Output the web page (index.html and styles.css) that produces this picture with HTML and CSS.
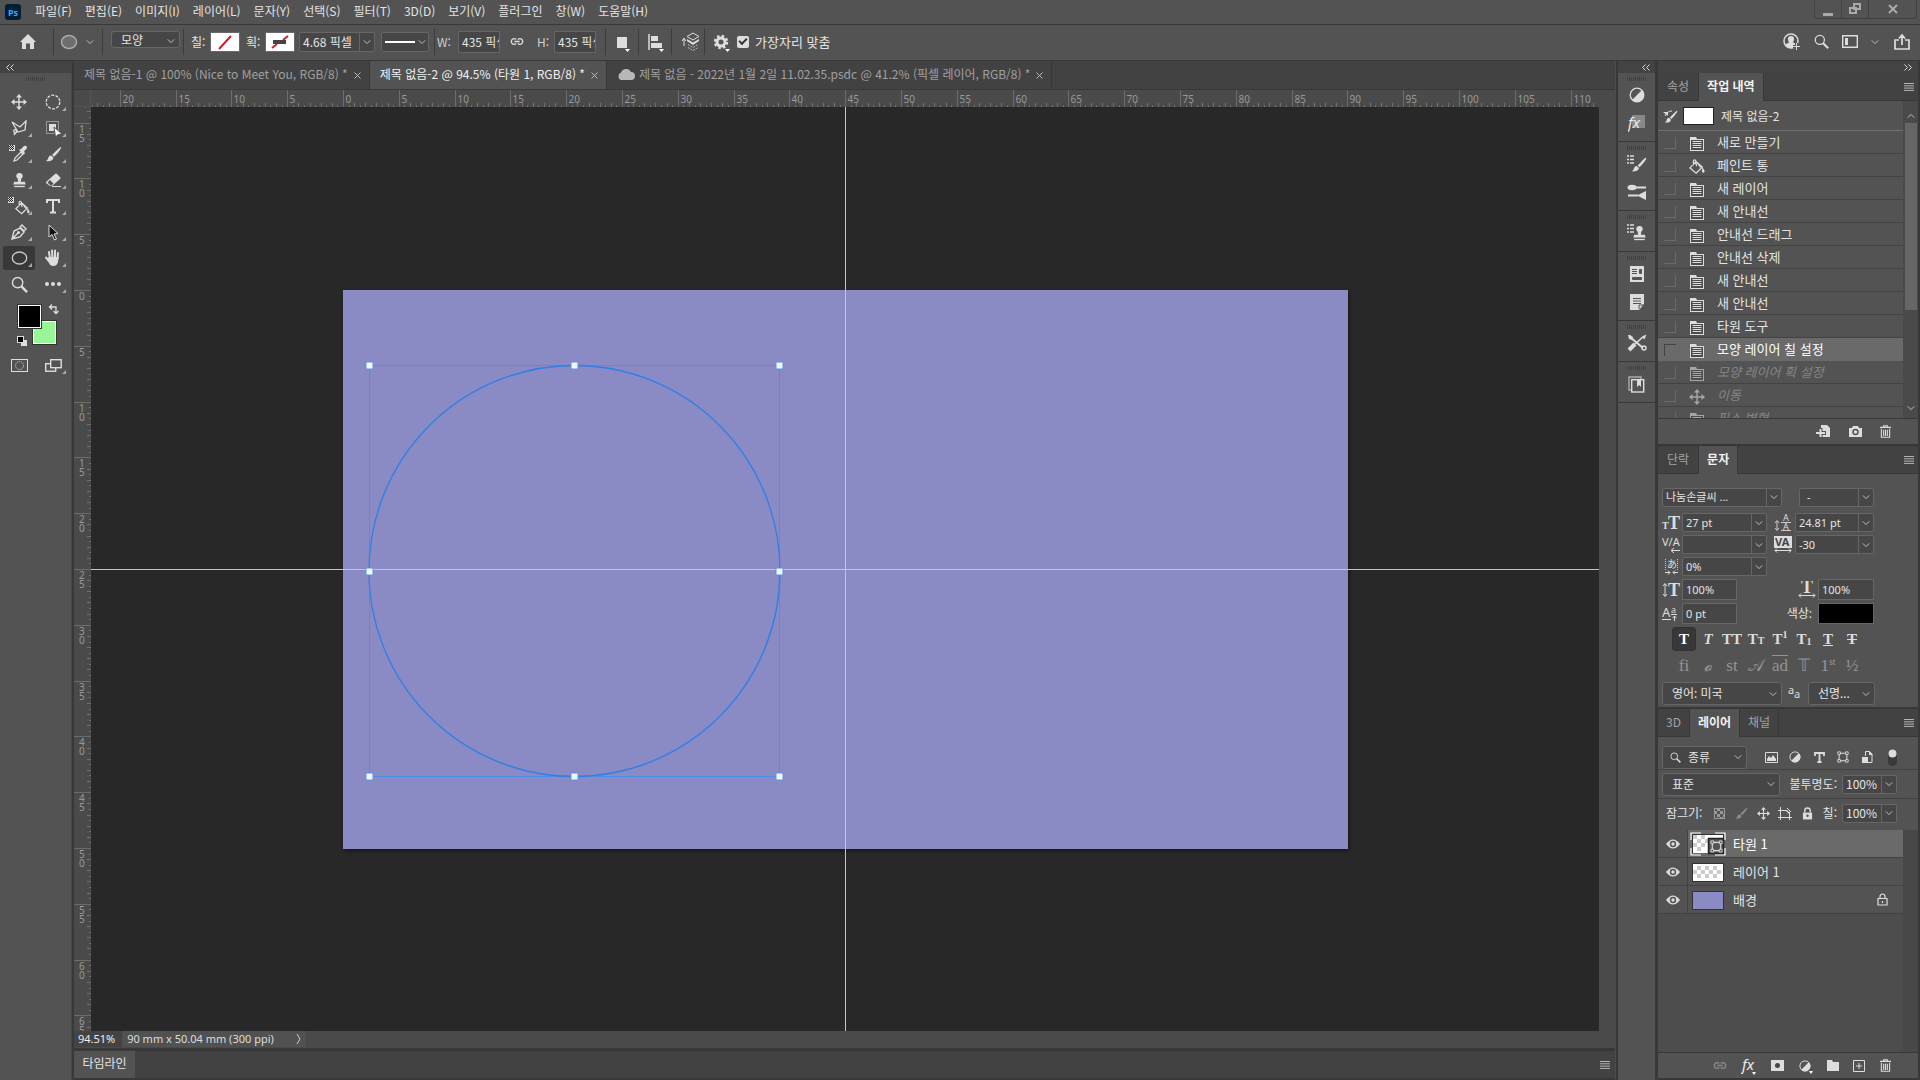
FILE: index.html
```html
<!DOCTYPE html>
<html lang="ko">
<head>
<meta charset="utf-8">
<title>제목 없음-2</title>
<link rel="stylesheet" href="styles.css">
</head>
<body>
<svg class="sprite" aria-hidden="true">
  <symbol id="chev" viewBox="0 0 10 10"><path d="M1 3l4 4 4-4" fill="none" stroke="#c4c4c4" stroke-width="1.2"/></symbol>
  <symbol id="burger" viewBox="0 0 10 8"><path d="M0 .5h10M0 2.8h10M0 5.1h10M0 7.4h10" stroke="#b5b5b5"/></symbol>
  <symbol id="doc" viewBox="0 0 16 16"><path d="M1 1h6l1 2h7v12H1z" fill="#ddd"/><path d="M2 4h12v10H2z" fill="#4c4c4c"/><path d="M3.500 5.500h9M3.500 7.500h9M3.500 9.500h9M3.500 11.500h9" stroke="#ddd"/></symbol>
  <symbol id="move" viewBox="0 0 16 16"><path d="M8 2v12M2 8h12" stroke="currentColor" stroke-width="1.400"/><path d="M8 0l3 3.500H5zM8 16l3-3.500H5zM0 8l3.500-3v6zM16 8l-3.500-3v6z" fill="currentColor"/></symbol>
  <symbol id="bucket" viewBox="0 0 18 17"><path d="M1 10l7-7 7 6-7 7zM5 7V2q1-2 2.500 0l1 6" fill="none" stroke="currentColor" stroke-width="1.400"/><path d="M15 9q3 4 2.500 5.500-1.500 2-3 0zM7.500 3l7 6-2 1z" fill="currentColor"/></symbol>
  <symbol id="half" viewBox="0 0 16 16"><circle cx="8" cy="8" r="6.800" fill="none" stroke="currentColor" stroke-width="1.300"/><path d="M13 3a7 7 0 0 1-10 10z" fill="currentColor"/></symbol>
  <symbol id="trash" viewBox="0 0 12 14"><path d="M0 2.500h12M4 2V.7h4V2M1.500 4v9.300h9V4M4 5v7M6 5v7M8 5v7" fill="none" stroke="currentColor" stroke-width="1.200"/></symbol>
  <symbol id="brush" viewBox="0 0 18 18"><path d="M17 1q1 1-5 8l-2.500 2.500-2-2L10 7q6-6.500 7-6z" fill="currentColor"/><path d="M6.500 10l2.500 2.500q-1 4.500-8 3.500 2-1 2.500-3.500.5-2.500 3-2.500z" fill="currentColor"/></symbol>
  <symbol id="stamp" viewBox="0 0 16 18"><path d="M8 1a3.500 3.500 0 0 1 2 6.500L9.500 11H14l1 3H1l1-3h4.500L6 7.500A3.500 3.500 0 0 1 8 1z" fill="currentColor"/><path d="M2 16.300h12" stroke="currentColor" stroke-width="1.500"/></symbol>
  <symbol id="eye" viewBox="0 0 14 10"><path d="M0 5q7-9 14 0-7 9-14 0z" fill="#ddd"/><circle cx="7" cy="5" r="3.200" fill="#555"/><circle cx="7" cy="5" r="1.700" fill="#ddd"/></symbol>
  <symbol id="shape" viewBox="0 0 14 14"><path d="M3 2.500h8M3 11.500h8M2.500 3v8M11.500 3v8" stroke="currentColor" stroke-width="1.200"/><path d="M1 1h3v3H1zM10 1h3v3h-3zM1 10h3v3H1zM10 10h3v3h-3z" fill="#555" stroke="currentColor"/></symbol>
  <symbol id="link" viewBox="0 0 16 10"><path d="M7 2.800A3.200 3.200 0 1 0 7 7.200M9 2.800A3.200 3.200 0 1 1 9 7.200M5 5h6" fill="none" stroke="currentColor" stroke-width="1.500"/></symbol>
  <symbol id="mag" viewBox="0 0 18 18"><circle cx="7" cy="7" r="5.500" fill="none" stroke="currentColor" stroke-width="1.500"/><path d="M11 11l6 6" stroke="currentColor" stroke-width="2.500"/></symbol>
  <symbol id="lock" viewBox="0 0 12 14"><path d="M3 6V4a3 3 0 0 1 6 0v2" fill="none" stroke="currentColor" stroke-width="1.500"/><path d="M1 6h10v7.500H1z" fill="currentColor"/><circle cx="6" cy="9.500" r="1.300" fill="#555"/></symbol>
  <symbol id="list" viewBox="0 0 7 9"><path d="M0 1h2M3 1h4M0 4.500h2M3 4.500h4M0 8h2M3 8h4" stroke="currentColor" stroke-width="1.400"/></symbol>
  <symbol id="checker" viewBox="0 0 6 6"><path d="M0 0h6v6H0z" fill="#ddd"/><path d="M1 0h1v1H1zM3 0h1v1H3zM0 1h1v1H0zM2 1h1v1H2zM4 1h1v1H4zM1 2h1v1H1zM3 2h1v1H3zM0 3h1v1H0zM2 3h1v1H2zM4 3h1v1H4zM1 4h1v1H1zM3 4h1v1H3z" fill="#222"/></symbol>
</svg>

<header class="menubar">
  <svg class="logo" viewBox="0 0 16 16"><rect width="16" height="16" rx="3" fill="#001e36"/><text x="8" y="12" text-anchor="middle">Ps</text></svg>
  <nav class="menu">
    <button>파일(F)</button><button>편집(E)</button><button>이미지(I)</button><button>레이어(L)</button><button>문자(Y)</button><button>선택(S)</button><button>필터(T)</button><button>3D(D)</button><button>보기(V)</button><button>플러그인</button><button>창(W)</button><button>도움말(H)</button>
  </nav>
  <div class="winbtns">
    <button aria-label="최소화"><svg width="10" height="14"><path d="M0 12.500h10" stroke="#aaa" stroke-width="3"/></svg></button>
    <button aria-label="이전 크기로"><svg width="12" height="12"><path d="M5 1h6v5H5zM1 5h6v5H1z" fill="#555" stroke="#aaa" stroke-width="2"/></svg></button>
    <button class="close" aria-label="닫기"><svg width="10" height="10"><path d="M1 1l8 8M9 1L1 9" stroke="#aaa" stroke-width="2"/></svg></button>
  </div>
</header>

<div class="options">
  <button class="home" aria-label="홈"><svg width="16" height="15"><path d="M8 0l8 8h-2v7h-4V9.500H6V15H2V8H0z" fill="#ddd"/></svg></button>
  <div class="opt toolpick"><svg width="18" height="16"><ellipse cx="9" cy="8" rx="7.500" ry="6.500" fill="#6e6e6e" stroke="#aaa" stroke-width="1.500"/></svg><svg width="8" height="8"><use href="#chev"/></svg></div>
  <div class="opt modepick"><span class="sel"><select aria-label="모드"><option>모양</option></select><svg width="8" height="8"><use href="#chev"/></svg></span></div>
  <div class="opt paint">
    <span>칠:</span><button class="swatch" aria-label="칠"><svg width="26" height="16"><path d="M7 15L19 2" stroke="#c8202c" stroke-width="2"/></svg></button>
    <span>획:</span><button class="swatch" aria-label="획"><svg width="26" height="16"><path d="M5 14l5-4M16 6l5-4" stroke="#c8202c" stroke-width="2"/><path d="M6 6h13v4H6z" fill="#444"/></svg></button>
    <span class="combo sw"><input aria-label="획 폭" value="4.68 픽셀"><button aria-label="목록"><svg width="8" height="8"><use href="#chev"/></svg></button></span>
    <button class="linetype" aria-label="획 유형"><svg width="30" height="4"><path d="M0 2h30" stroke="#fff" stroke-width="2"/></svg><svg width="8" height="8"><use href="#chev"/></svg></button>
  </div>
  <div class="opt dims">
    <label for="w">W:</label><input id="w" value="435 픽셀"><svg class="dimlink" width="14" height="9"><use href="#link"/></svg><label for="h">H:</label><input id="h" value="435 픽셀">
  </div>
  <div class="opt ob"><button aria-label="패스 작업"><svg width="16" height="20"><path d="M2 5h10v11H2z" fill="#ddd"/><path d="M10 17h5l-2.500 3z" fill="#fff"/></svg></button></div>
  <div class="opt ob"><button aria-label="맞춤"><svg width="16" height="20"><path d="M1 2v16" stroke="#ddd" stroke-width="1.500"/><path d="M3 4h7v5H3zM3 11h11v5H3z" fill="#ddd"/><path d="M11 17h5l-2.500 3z" fill="#fff"/></svg></button></div>
  <div class="opt ob wide"><button aria-label="정돈"><svg width="20" height="20"><path d="M3 14V7M1 9l2-3 2 3" fill="none" stroke="#ddd"/><path d="M12 1l6 3.500-6 3.500-6-3.500z" fill="none" stroke="#ddd"/><path d="M6 7l6 3.500L18 7v2l-6 4-6-4z" fill="#ddd"/><path d="M7 12.500l5 3 5-3M7 15.500l5 3 5-3" fill="none" stroke="#bbb" stroke-dasharray="2 1"/></svg></button></div>
  <div class="opt last">
    <svg width="18" height="20"><circle cx="8" cy="10" r="4" fill="none" stroke="#ddd" stroke-width="3"/><circle cx="8" cy="10" r="6" fill="none" stroke="#ddd" stroke-width="2.500" stroke-dasharray="2.500 2.200"/><path d="M12 17h5l-2.500 3z" fill="#fff"/></svg>
    <label class="check"><input type="checkbox" checked><span>가장자리 맞춤</span></label>
  </div>
  <div class="acct">
    <svg width="18" height="18"><circle cx="8" cy="8" r="7" fill="none" stroke="#ddd" stroke-width="1.500"/><path d="M2 13q1-3 4-3.500Q3 3 8 3t2 6.500q3 .5 3.500 2l-3 3.500q-5 1-8.500-2z" fill="#ddd"/><path d="M13.500 10v7M10 13.500h7" stroke="#535353" stroke-width="3"/><path d="M13.500 10v7M10 13.500h7" stroke="#ddd"/></svg>
    <svg width="15" height="15"><use href="#mag"/></svg>
    <svg width="16" height="13"><path d="M.7.7h14.600v11.600H.7z" fill="none" stroke="#ddd" stroke-width="1.400"/><path d="M3 3h3v7H3z" fill="#ddd"/></svg>
    <svg class="wschev" width="8" height="8"><use href="#chev"/></svg>
    <svg width="16" height="16"><path d="M5 6H1v9h14V6h-4M8 11V2M5 4.500L8 1l3 3.500" fill="none" stroke="#ddd" stroke-width="1.700"/></svg>
  </div>
</div>

<main class="work">
  <aside class="tools">
    <div class="dockhead"><svg width="8" height="7"><path d="M3.500.5l-3 3 3 3M7.500.5l-3 3 3 3" fill="none" stroke="#ddd"/></svg></div>
    <div class="toolbody">
      <div class="grip"></div>
      <div class="toolgrid">
        <button aria-label="이동"><svg width="16" height="16"><use href="#move"/></svg></button>
        <button class="more" aria-label="원형 선택"><svg width="16" height="16"><circle cx="8" cy="8" r="6.800" fill="none" stroke="#ddd" stroke-width="1.300" stroke-dasharray="3 1.300"/></svg></button>
        <button class="more" aria-label="올가미"><svg width="16" height="16"><path d="M1 2l8 5 6-6-1 9-7 2zM6 11q-4-3-3 1t3-1l-3 4" fill="none" stroke="#ddd" stroke-width="1.300"/></svg></button>
        <button class="more" aria-label="개체 선택"><svg width="17" height="17"><path d="M1.500 1.500h12v12h-12z" fill="none" stroke="#ddd" stroke-dasharray="1 1"/><path d="M4 4h7v7H4z" fill="#ddd"/><path d="M9 7l8 7-4 .5L10.500 17z" fill="#fff" stroke="#535353"/></svg></button>
        <button class="more" aria-label="스포이드"><svg width="20" height="18"><use href="#checker" width="6" height="6"/><path d="M5 16l1-3 6-6 2 2-6 6z" fill="none" stroke="#ddd" stroke-width="1.300"/><path d="M10 5l2-1 3-3q3-1 3 2l-3 3.500 1 2-1.500 1z" fill="#ddd"/></svg></button>
        <button class="more" aria-label="브러시"><svg width="17" height="17"><use href="#brush"/></svg></button>
        <button class="more" aria-label="도장"><svg width="15" height="16"><use href="#stamp"/></svg></button>
        <button class="more" aria-label="지우개"><svg width="17" height="16"><path d="M1 10l9-8q1-1 2 0l3 3q1 1 0 2l-8 7H5L1 11z" fill="#ddd"/><path d="M2.500 10.500L5 8l3.500 3.500-2 2h-1z" fill="#535353"/><path d="M7 14.500h9" stroke="#ddd"/></svg></button>
        <button class="more" aria-label="페인트 통"><svg width="22" height="18"><use href="#checker" width="6" height="6"/><use href="#bucket" x="7" y="3" width="15" height="15"/></svg></button>
        <button class="more" aria-label="문자"><svg width="14" height="15"><path d="M1 4V1h12v3M7 1v12.500M4 13.500h6" fill="none" stroke="#ddd" stroke-width="2"/></svg></button>
        <button class="more" aria-label="펜"><svg width="16" height="16"><path d="M1 15l2-8 6-3 4 4-4 5zM1 15l6-6M9 3l2-2 4 4-2 2z" fill="none" stroke="#ddd" stroke-width="1.400"/><circle cx="7.500" cy="8.500" r="1.500" fill="#ddd"/></svg></button>
        <button class="more" aria-label="패스 선택"><svg width="12" height="17"><path d="M2 1v12l3-2.500L7.500 16l2-1L7 10l4-.5z" fill="#111" stroke="#ddd"/></svg></button>
        <button class="more on" aria-label="타원"><svg width="17" height="16"><ellipse cx="8.500" cy="8" rx="7.200" ry="6" fill="none" stroke="#c8c8c8" stroke-width="1.300"/></svg></button>
        <button class="more" aria-label="손"><svg width="18" height="18"><path d="M6 10L5 3M8.500 9L8 1.500M11 9V1.500M13.500 10l.5-6M5 12L2 8.500" stroke="#ddd" stroke-width="2" stroke-linecap="round"/><path d="M5 8h9.500l-.5 5q-1 4-4.500 4T5 14l-2.500-4z" fill="#ddd"/></svg></button>
        <button aria-label="돋보기"><svg width="17" height="17"><use href="#mag"/></svg></button>
        <button class="more" aria-label="도구 모음 편집"><svg width="16" height="4"><circle cx="2" cy="2" r="2" fill="#ddd"/><circle cx="8" cy="2" r="2" fill="#ddd"/><circle cx="14" cy="2" r="2" fill="#ddd"/></svg></button>
      </div>
      <svg class="colors" width="50" height="50"><rect x="18.500" y="20.500" width="24" height="24" fill="#98f598" stroke="#333"/><rect x="19.500" y="21.500" width="22" height="22" fill="#98f598" stroke="#fff"/><rect x="3.500" y="4.500" width="24" height="24" stroke="#333"/><rect x="4.500" y="5.500" width="22" height="22" stroke="#fff"/><path d="M36 7h6v6M38 4.500L35.500 7 38 9.500M39.500 11l2.500 2.500 2.500-2.500" fill="none" stroke="#ddd" stroke-width="1.300"/><rect x="7" y="40" width="6" height="6" fill="#ddd"/><rect x="3.500" y="36.500" width="6" height="6" stroke="#ddd"/></svg>
      <div class="toolgrid modes">
        <button aria-label="빠른 마스크"><svg width="17" height="13"><rect x=".5" y=".5" width="16" height="12" fill="none" stroke="#ddd"/><circle cx="8.500" cy="6.500" r="4" fill="none" stroke="#ddd" stroke-dasharray="1 1"/></svg></button>
        <button class="more" aria-label="화면 모드"><svg width="17" height="13"><rect x=".7" y="4.700" width="10" height="7.500" fill="none" stroke="#ddd" stroke-width="1.400"/><rect x="5.700" y=".7" width="10.500" height="8" fill="#535353" stroke="#ddd" stroke-width="1.400"/></svg></button>
      </div>
    </div>
  </aside>

  <section class="docs">
    <div class="tabs">
      <div class="tab"><span>제목 없음-1 @ 100% (Nice to Meet You, RGB/8) *</span><button aria-label="닫기"><svg width="7" height="7"><path d="M.5.5l6 6M6.500.5l-6 6" stroke="#bbb"/></svg></button></div>
      <div class="tab active"><span>제목 없음-2 @ 94.5% (타원 1, RGB/8) *</span><button aria-label="닫기"><svg width="7" height="7"><path d="M.5.5l6 6M6.500.5l-6 6" stroke="#bbb"/></svg></button></div>
      <div class="tab"><svg class="cloud" width="18" height="12"><path d="M4 12a4 4 0 0 1 0-7.500 5.500 5.500 0 0 1 10-.5 4 4 0 0 1 0 8z" fill="#b8b8b8"/></svg><span>제목 없음 - 2022년 1월 2일 11.02.35.psdc @ 41.2% (픽셀 레이어, RGB/8) *</span><button aria-label="닫기"><svg width="7" height="7"><path d="M.5.5l6 6M6.500.5l-6 6" stroke="#bbb"/></svg></button></div>
    </div>
    <div class="view">
      <div class="corner"></div>
      <svg class="ruler" id="rulerX"></svg>
      <div class="gutter"></div>
      <svg class="ruler" id="rulerY"></svg>
      <svg class="canvas">
        <defs><filter id="sh" x="-5%" y="-5%" width="110%" height="110%"><feDropShadow dx="1" dy="2" stdDeviation="2" flood-color="#000" flood-opacity=".5"/></filter></defs>
        <rect x="252" y="183" width="1005" height="559" fill="#8a8ac5" filter="url(#sh)"/>
        <line x1="0" x2="100%" y1="462.500" y2="462.500" stroke="#5ff0f5"/>
        <line x1="754.500" x2="754.500" y1="0" y2="100%" stroke="#5ff0f5"/>
        <rect x="278.500" y="258.500" width="410" height="411" fill="none" stroke="#4a90e8"/>
        <ellipse cx="483.500" cy="464" rx="205.500" ry="205.500" fill="none" stroke="#2f7fe6" stroke-width="1.300"/>
        <g fill="#f4f6fc" stroke="#5a94e0"><path d="M275 255h7v7h-7zM480 255h7v7h-7zM685 255h7v7h-7zM275 461h7v7h-7zM685 461h7v7h-7zM275 666h7v7h-7zM480 666h7v7h-7zM685 666h7v7h-7z"/></g>
      </svg>
    </div>
    <footer class="status"><input aria-label="확대/축소" value="94.51%"><button>90 mm x 50.04 mm (300 ppi)<svg width="5" height="10"><path d="M1 0l3 5-3 5" fill="none" stroke="#ccc"/></svg></button></footer>
    <div class="timeline"><button>타임라인</button><svg width="10" height="8"><use href="#burger"/></svg></div>
  </section>

  <aside class="strip">
    <div class="dockhead"><svg width="8" height="7"><path d="M3.500.5l-3 3 3 3M7.500.5l-3 3 3 3" fill="none" stroke="#ddd"/></svg></div>
    <div class="stripbody">
      <div class="sgroup"><div class="grip"></div>
        <button aria-label="조정"><svg width="16" height="16"><use href="#half"/></svg></button>
        <button aria-label="스타일"><svg width="18" height="18"><path d="M4 1h13v13H4z" fill="#888"/><text class="fx" x="0" y="14">fx</text></svg></button></div>
      <div class="sgroup"><div class="grip"></div>
        <button aria-label="브러시"><svg width="20" height="18"><use href="#list" width="7" height="9"/><use href="#brush" x="4" y="2" width="16" height="16"/></svg></button>
        <button aria-label="브러시 설정"><svg width="20" height="16"><path d="M9 3.500h10M1 11.500h10" stroke="#ddd" stroke-width="2"/><ellipse cx="5" cy="3.500" rx="4.500" ry="2.700" fill="#ddd"/><path d="M11 11l8-4v9l-8-4z" fill="#ddd"/></svg></button></div>
      <div class="sgroup"><div class="grip"></div>
        <button aria-label="복제 원본"><svg width="20" height="18"><use href="#list" width="7" height="9"/><use href="#stamp" x="5" y="1" width="15" height="16"/></svg></button></div>
      <div class="sgroup"><div class="grip"></div>
        <button aria-label="라이브러리"><svg width="14" height="16"><path d="M0 0h14v16H0z" fill="#ddd"/><path d="M2 3.500h5M2 5.500h5M2 7.500h5M2.500 11.500h9v2h-9zM9.500 3.500h2v4h-2z" fill="#535353" stroke="#535353"/></svg></button>
        <button aria-label="메모"><svg width="14" height="16"><path d="M0 0h14v10l-5 6H0z" fill="#ddd"/><path d="M3 4.500h8M3 7h8M3 9.500h8M9 15v-4h5" fill="none" stroke="#535353"/></svg></button></div>
      <div class="sgroup"><div class="grip"></div>
        <button aria-label="도구 사전 설정"><svg width="20" height="18"><path d="M3 3l13 11" stroke="#ddd" stroke-width="2"/><path d="M2 16L8 10" stroke="#ddd" stroke-width="4"/><path d="M8 10l8-7 2-1-1 3" fill="none" stroke="#ddd" stroke-width="1.500"/><path d="M1 1l1 4 3 1 1-3-3-2z" fill="#ddd"/><circle cx="17" cy="14" r="2" fill="none" stroke="#ddd" stroke-width="1.400"/></svg></button></div>
      <div class="sgroup"><div class="grip"></div>
        <button aria-label="레이어 구성"><svg width="17" height="17"><path d="M3 14H1V1h12v2" fill="none" stroke="#aaa" stroke-width="1.400"/><rect x="3.700" y="3.700" width="12" height="12.300" fill="none" stroke="#ddd" stroke-width="1.400"/><path d="M9 4h4v7l-2-2-2 2z" fill="#ddd"/></svg></button></div>
    </div>
  </aside>

  <aside class="panels">
    <div class="dockhead right"><svg width="8" height="7"><path d="M.5.5l3 3-3 3M4.500.5l3 3-3 3" fill="none" stroke="#ddd"/></svg></div>

    <section class="panel history">
      <div class="ptabs"><button>속성</button><button class="active">작업 내역</button><svg width="10" height="8"><use href="#burger"/></svg></div>
      <div class="scroller">
        <div class="hlist">
          <div class="snap"><svg width="15" height="15"><path d="M2 7q2-5 7-5" fill="none" stroke="#ddd"/><path d="M0 3h5v4z" fill="#ddd"/><use href="#brush" x="1" y="1" width="14" height="14"/></svg><i class="thumb"></i><span>제목 없음-2</span></div>
          <label class="hrow"><input type="checkbox"><svg width="16" height="16"><use href="#doc"/></svg><span>새로 만들기</span></label>
          <label class="hrow"><input type="checkbox"><svg width="18" height="17"><use href="#bucket"/></svg><span>페인트 통</span></label>
          <label class="hrow"><input type="checkbox"><svg width="16" height="16"><use href="#doc"/></svg><span>새 레이어</span></label>
          <label class="hrow"><input type="checkbox"><svg width="16" height="16"><use href="#doc"/></svg><span>새 안내선</span></label>
          <label class="hrow"><input type="checkbox"><svg width="16" height="16"><use href="#doc"/></svg><span>안내선 드래그</span></label>
          <label class="hrow"><input type="checkbox"><svg width="16" height="16"><use href="#doc"/></svg><span>안내선 삭제</span></label>
          <label class="hrow"><input type="checkbox"><svg width="16" height="16"><use href="#doc"/></svg><span>새 안내선</span></label>
          <label class="hrow"><input type="checkbox"><svg width="16" height="16"><use href="#doc"/></svg><span>새 안내선</span></label>
          <label class="hrow"><input type="checkbox"><svg width="16" height="16"><use href="#doc"/></svg><span>타원 도구</span></label>
          <label class="hrow on"><input type="checkbox"><svg width="16" height="16"><use href="#doc"/></svg><span>모양 레이어 칠 설정</span></label>
          <label class="hrow off"><input type="checkbox"><svg width="16" height="16"><use href="#doc"/></svg><span>모양 레이어 획 설정</span></label>
          <label class="hrow off"><input type="checkbox"><svg width="16" height="16"><use href="#move"/></svg><span>이동</span></label>
          <label class="hrow off"><input type="checkbox"><svg width="16" height="16"><use href="#doc"/></svg><span>픽스 변형</span></label>
        </div>
        <div class="sbar"><svg class="up" width="8" height="8"><use href="#chev"/></svg><i></i><svg width="8" height="8"><use href="#chev"/></svg></div>
      </div>
      <div class="pfoot">
        <button aria-label="새 문서"><svg width="15" height="13"><path d="M5 0h6l3 3v9H5z" fill="#ddd"/><path d="M4.500 3v10M0 8h10" stroke="#535353" stroke-width="4"/><path d="M4.500 4v8M0 8h9" stroke="#ddd" stroke-width="2"/></svg></button>
        <button aria-label="새 스냅숏"><svg width="13" height="11"><path d="M0 2h3l1-2h5l1 2h3v9H0z" fill="#ddd"/><circle cx="6.500" cy="6" r="2.500" fill="none" stroke="#535353" stroke-width="1.500"/></svg></button>
        <button aria-label="삭제"><svg width="11" height="13"><use href="#trash"/></svg></button>
      </div>
    </section>

    <section class="panel char">
      <div class="ptabs"><button>단락</button><button class="active">문자</button><svg width="10" height="8"><use href="#burger"/></svg></div>
      <div class="cbody">
        <div class="crow"><span class="combo font"><input aria-label="글꼴" value="나눔손글씨 ..."><button aria-label="목록"><svg width="8" height="8"><use href="#chev"/></svg></button></span><span class="combo style"><input aria-label="스타일" value="-"><button aria-label="목록"><svg width="8" height="8"><use href="#chev"/></svg></button></span></div>
        <div class="crow pair">
          <svg width="19" height="16"><text class="ser b s10" x="0" y="14">T</text><text class="ser b s18" x="6" y="14">T</text></svg><span class="combo"><input aria-label="크기" value="27 pt"><button aria-label="목록"><svg width="8" height="8"><use href="#chev"/></svg></button></span>
          <svg width="19" height="17"><path d="M3 7v9M1 9l2-2.500L5 9M1 14l2 2.500L5 14M7 8.500h10M7 16.500h10" fill="none" stroke="#ccc"/><text class="s9" x="9" y="7">A</text><text class="s9" x="9" y="16">A</text></svg><span class="combo"><input aria-label="행간" value="24.81 pt"><button aria-label="목록"><svg width="8" height="8"><use href="#chev"/></svg></button></span>
        </div>
        <div class="crow pair">
          <svg width="19" height="17"><text class="s12" x="0" y="10">V/A</text><path d="M18 14.500h-8M12 12l-3 2.500 3 2.500" fill="none" stroke="#ddd"/></svg><span class="combo"><input aria-label="커닝" value=""><button aria-label="목록"><svg width="8" height="8"><use href="#chev"/></svg></button></span>
          <svg width="19" height="17"><path d="M0 0h18v12H0z" fill="#ddd"/><text class="s12 b dark" x="1" y="10">VA</text><path d="M1 14.500h16M3 12.500l-2 2 2 2M15 12.500l2 2-2 2" fill="none" stroke="#ddd"/></svg><span class="combo"><input aria-label="자간" value="-30"><button aria-label="목록"><svg width="8" height="8"><use href="#chev"/></svg></button></span>
        </div>
        <div class="crow pair">
          <svg width="19" height="17"><text class="s10" x="5" y="10">あ</text><path d="M3.500 1v11M15.500 1v11" stroke="#ccc" stroke-dasharray="1 1"/><path d="M3 14.500h5M11 14.500h5M6 12.500l2 2-2 2M13 12.500l-2 2 2 2" fill="none" stroke="#ddd"/></svg><span class="combo"><input aria-label="비율 간격" value="0%"><button aria-label="목록"><svg width="8" height="8"><use href="#chev"/></svg></button></span>
        </div>
        <div class="crow box">
          <svg width="19" height="16"><path d="M3 2v12M1 4l2-2.500L5 4M1 12l2 2.500L5 12" fill="none" stroke="#ddd"/><text class="ser b s18" x="6" y="14">T</text></svg><input aria-label="세로 비율" value="100%"><i></i>
          <svg width="18" height="17"><text class="ser b s18" x="3" y="12">T</text><path d="M1 14.500h16M3 12.500l-2 2 2 2M15 12.500l2 2-2 2" fill="none" stroke="#ddd"/></svg><input aria-label="가로 비율" value="100%">
        </div>
        <div class="crow box">
          <svg width="19" height="16"><text class="s13" x="0" y="11">A</text><text class="s9" x="9" y="7">a</text><path d="M0 13.500h9M9 8.500h6M12.500 15v-5M10.500 12l2-2 2 2" fill="none" stroke="#ddd"/></svg><input aria-label="기준선 이동" value="0 pt"><span class="clabel">색상:</span><button class="cswatch" aria-label="색상"></button>
        </div>
        <div class="glyphs ser">
          <button class="on b">T</button><button class="it">T</button><button>TT</button><button>T<small>T</small></button><button>T<sup>1</sup></button><button>T<sub>1</sub></button><button class="un">T</button><button class="st">T</button>
        </div>
        <div class="glyphs lig ser">
          <button>fi</button><button class="it">&#x1D4F8;</button><button>st</button><button>&#x1D49C;</button><button class="ov">ad</button><button>&#x1D54B;</button><button>1<sup>st</sup></button><button>½</button>
        </div>
        <div class="crow lang"><span class="sel"><select aria-label="언어"><option>영어: 미국</option></select><svg width="8" height="8"><use href="#chev"/></svg></span><svg width="14" height="15"><text class="s11" x="0" y="8">a</text><text class="s11" x="6" y="12">a</text></svg><span class="sel aa"><select aria-label="앤티 앨리어스"><option>선명...</option></select><svg width="8" height="8"><use href="#chev"/></svg></span></div>
      </div>
    </section>

    <section class="panel layers">
      <div class="ptabs"><button>3D</button><button class="active">레이어</button><button>채널</button><svg width="10" height="8"><use href="#burger"/></svg></div>
      <div class="lrow filter">
        <span class="sel kind"><svg class="kmag" width="11" height="11"><use href="#mag"/></svg><select aria-label="필터"><option>종류</option></select><svg width="8" height="8"><use href="#chev"/></svg></span>
        <div class="ficons">
          <button aria-label="픽셀"><svg width="13" height="11"><path d="M.5.5h12v10H.5z" fill="none" stroke="#ddd"/><path d="M2 9V7l2-3 2 2 2-3 3 4v2z" fill="#ddd"/></svg></button>
          <button aria-label="조정"><svg width="12" height="12"><use href="#half"/></svg></button>
          <button aria-label="문자"><svg width="11" height="11"><path d="M1 4V1h9v3M5.500 1v9M3.500 10h4" fill="none" stroke="#ddd" stroke-width="1.800"/></svg></button>
          <button aria-label="모양"><svg width="12" height="12"><use href="#shape"/></svg></button>
          <button aria-label="고급 개체"><svg width="11" height="13"><path d="M3.500 5V.5h4L10 3v8.500H6" fill="none" stroke="#ddd"/><path d="M0 6h6v6H0zM7 0v4h4z" fill="#ddd"/></svg></button>
          <button aria-label="필터 켜기"><svg width="9" height="17"><rect width="9" height="17" rx="4.500" fill="#3a3a3a"/><circle cx="4.500" cy="4.500" r="4" fill="#ddd"/></svg></button>
        </div>
      </div>
      <div class="lrow">
        <span class="sel blend"><select aria-label="혼합 모드"><option>표준</option></select><svg width="8" height="8"><use href="#chev"/></svg></span>
        <label for="op">불투명도:</label><span class="combo pct"><input id="op" value="100%"><button aria-label="목록"><svg width="8" height="8"><use href="#chev"/></svg></button></span>
      </div>
      <div class="lrow locks"><span>잠그기:</span>
        <button class="dim" aria-label="투명"><svg width="11" height="11"><rect x=".5" y=".5" width="10" height="10" fill="none" stroke="#999"/><path d="M3 0h3v3H3zM9 3v3H6V3zM0 3h3v3H0zM3 6h3v3H3zM6 9h3v2H6zM9 6h2v3H9z" fill="#999"/></svg></button>
        <button class="dim" aria-label="픽셀"><svg width="13" height="13"><use href="#brush"/></svg></button>
        <button aria-label="위치"><svg width="13" height="13"><use href="#move"/></svg></button>
        <button aria-label="대지"><svg width="14" height="13"><path d="M2.500 0v13M0 3.500h9M11.500 5v8M0 10.500h14M9 1l4 4" fill="none" stroke="#ddd"/><path d="M7 3h2l3 3v2z" fill="#ddd"/></svg></button>
        <button aria-label="모두"><svg width="11" height="13"><use href="#lock"/></svg></button>
        <label for="fl">칠:</label><span class="combo pct"><input id="fl" value="100%"><button aria-label="목록"><svg width="8" height="8"><use href="#chev"/></svg></button></span>
      </div>
      <div class="llist">
        <ul>
          <li class="on"><button class="eyeb" aria-label="보기"><svg width="14" height="10"><use href="#eye"/></svg></button><div class="lname"><svg width="36" height="24"><rect x="3" y="3" width="30" height="18" fill="#fff"/><path d="M3 3h4v4H3zM11 3h4v4h-4zM7 7h4v4H7zM15 7h4v4h-4zM3 11h4v4H3zM11 11h4v4h-4zM7 15h4v4H7z" fill="#ccc"/><path d="M2.500 21V2.500h31V21" fill="none" stroke="#333"/><rect x="18.500" y="6.500" width="15" height="15" fill="#555" stroke="#222" stroke-width="1.500"/><use href="#shape" x="20" y="8" width="13" height="13"/><path d="M1 8V1h10M25 1h10v7M35 16v7H25M11 23H1v-7" fill="none" stroke="#fff" stroke-width="1.200"/></svg><span>타원 1</span></div></li>
          <li><button class="eyeb" aria-label="보기"><svg width="14" height="10"><use href="#eye"/></svg></button><div class="lname"><svg width="36" height="20"><rect x="2.500" y="1.500" width="31" height="18" fill="#fff" stroke="#333"/><path d="M7 4h4v4H7zM15 4h4v4h-4zM23 4h4v4h-4zM3 8h4v4H3zM11 8h4v4h-4zM19 8h4v4h-4zM27 8h4v4h-4zM7 12h4v4H7zM15 12h4v4h-4zM23 12h4v4h-4z" fill="#ccc"/></svg><span>레이어 1</span></div></li>
          <li><button class="eyeb" aria-label="보기"><svg width="14" height="10"><use href="#eye"/></svg></button><div class="lname"><svg width="36" height="20"><rect x="2.500" y="1.500" width="31" height="18" fill="#8a8ac5" stroke="#333"/></svg><span>배경</span><svg class="lk" width="11" height="13"><path d="M3 5V3.500a2.500 2.500 0 0 1 5 0V5M1 5.500h9v6.500H1zM5.500 8v2" fill="none" stroke="#ddd" stroke-width="1.200"/></svg></div></li>
        </ul>
        <div class="lbar"></div>
      </div>
      <div class="pfoot lfoot">
        <button class="dim" aria-label="연결"><svg width="14" height="9"><use href="#link"/></svg></button>
        <button aria-label="스타일"><svg width="16" height="18"><text class="fx" x="1" y="13">fx</text><path d="M11 15h4l-2 3z" fill="#fff"/></svg></button>
        <button aria-label="마스크"><svg width="13" height="11"><path d="M0 0h13v11H0z" fill="#ddd"/><circle cx="6.500" cy="5.500" r="2.500" fill="#444"/></svg></button>
        <button aria-label="조정"><svg width="15" height="16"><use href="#half" x="1" y="2" width="12" height="12"/><path d="M11 13h4l-2 3z" fill="#fff"/></svg></button>
        <button aria-label="그룹"><svg width="12" height="11"><path d="M0 0h5l1 2h6v9H0z" fill="#ddd"/></svg></button>
        <button aria-label="새 레이어"><svg width="12" height="12"><path d="M.5.5h11v11H.5zM6 3v6M3 6h6" fill="none" stroke="#ddd"/></svg></button>
        <button aria-label="삭제"><svg width="11" height="13"><use href="#trash"/></svg></button>
      </div>
    </section>
  </aside>
</main>
<script src="script.js"></script>
</body>
</html>
```
FILE: styles.css
```css
* { box-sizing: border-box; }
body {
  margin: 0; min-height: 100vh; display: flex; flex-direction: column;
  background: #535353; color: #e4e4e4;
  font: 12px/16px "Noto Sans CJK KR", "Noto Sans", sans-serif;
  overflow: hidden; white-space: nowrap;
}
button, input, select { font: inherit; color: inherit; background: none; border: 0; margin: 0; padding: 0; min-width: 0; }
button { display: flex; align-items: center; justify-content: center; }
select { appearance: none; }
svg { flex: none; display: block; color: #ddd; }
.sprite { width: 0; height: 0; position: absolute; }
text { fill: #ddd; }
.s9 { font-size: 9px; } .s10 { font-size: 10px; } .s11 { font-size: 11px; } .s12 { font-size: 11px; } .s13 { font-size: 13px; } .s18 { font-size: 18px; }
.ser { font-family: "Liberation Serif", serif; }
.b { font-weight: bold; }
.dark { fill: #444; }
.fx { font: italic 15px "Noto Sans", sans-serif; fill: #eee; }

/* Menu bar */
.menubar { display: flex; height: 25px; border-bottom: 1px solid #383838; padding: 0 0 1px 5px; align-items: center; }
.logo { width: 16px; height: 16px; }
.logo text { font: bold 9px "Noto Sans", sans-serif; fill: #31a8ff; }
.menu { display: flex; gap: 13px; margin-left: 14px; flex: 1; padding-bottom: 2px; }
.winbtns { display: flex; align-self: flex-start; height: 19px; margin-right: 3px; border: 1px solid #404040; border-top: 0; border-radius: 0 0 4px 4px; }
.winbtns button { width: 27px; border-right: 1px solid #404040; }
.winbtns .close { width: 47px; border: 0; }

/* Options bar */
.options { display: flex; align-items: center; height: 36px; border-bottom: 1px solid #383838; padding: 0 10px 2px 3px; }
.home { width: 50px; height: 30px; }
.opt { display: flex; align-items: center; height: 26px; border-left: 1px solid #3c3c3c; }
.toolpick { width: 49px; padding-left: 6px; gap: 8px; }
.modepick { width: 81px; padding: 0 3px 5px 8px; }
.modepick .sel { flex: 1; height: 17px; }
.modepick select { padding: 0 0 2px 9px; }
.paint { width: 251px; padding-left: 7px; }
.paint span + button { margin-left: 4px; }
.paint > button + span { margin-left: 6px; }
.paint > span:not(.combo) { width: 15px; }
.swatch { width: 30px; height: 20px; background: #fff; border: 1px solid #6a6a6a; }
.sw { width: 76px; height: 20px; }
.paint > .sw { margin-left: 4px; }
.paint .combo + .linetype { margin-left: 6px; }
.paint .combo button { margin: 0; }
.linetype { width: 48px; height: 20px; gap: 3px; background: #464646; border: 1px solid #666; border-radius: 2px; }
.dims { width: 171px; padding-left: 2px; }
.dims label { width: 21px; color: #d0d0d0; }
.dims input { width: 42px; height: 22px; background: #464646; border: 1px solid #666; padding-left: 3px; }
.dims .dimlink { margin: 0 13px 0 10px; }
.dims .dimlink + label { width: 17px; }
.ob { width: 33px; padding-left: 9px; }
.last { padding-left: 8px; gap: 6px; }
.check { display: flex; align-items: center; gap: 6px; font-size: 13px; }
.check input { appearance: none; width: 12px; height: 12px; background: #ddd; border-radius: 2px; display: grid; place-items: center; }
.check input::after { content: ""; width: 6px; height: 3px; border: solid #333; border-width: 0 0 2px 2px; transform: rotate(-45deg); margin-bottom: 2px; }
.acct { margin-left: auto; display: flex; align-items: center; gap: 13px; }
.acct .wschev { margin-right: 2px; }

.sel { display: grid; align-items: center; background: #464646; border: 1px solid #666; border-radius: 3px; }
.sel select { grid-area: 1/1; width: 100%; height: 100%; }
.sel svg { grid-area: 1/1; justify-self: end; margin-right: 4px; pointer-events: none; }
.combo { display: flex; background: #464646; border: 1px solid #666; border-radius: 2px; overflow: hidden; }
.combo input { flex: 1; width: 0; padding-left: 3px; }
.combo button { width: 15px; border-left: 1px solid #666; }

/* Workspace */
.work { flex: 1; display: grid; grid-template-columns: 73px minmax(0, 1fr) 43px 262px; min-height: 0; background: #383838; }
.dockhead { height: 12px; background: #434343; display: flex; align-items: center; padding-left: 6px; }
.dockhead.right { justify-content: flex-end; padding-right: 6px; }
.grip { width: 20px; height: 4px; margin: 3px auto 0; background: repeating-linear-gradient(90deg, #404040 0 1px, transparent 1px 2px); }

.tools { display: flex; flex-direction: column; padding-right: 1px; }
.toolbody { flex: 1; background: #535353; padding: 1px 3px 0 3px; border-right: 1px solid #4a4a4a; }
.toolgrid { display: grid; grid-template-columns: 32px 32px; column-gap: 2px; grid-auto-rows: 26px; margin-top: 8px; }
.toolgrid button { margin: 1px 0; position: relative; border-radius: 2px; }
.toolgrid .on { background: #383838; }
.more::after { content: ""; position: absolute; right: 3px; bottom: 3px; border: 2px solid #aaa; border-top-color: transparent; border-left-color: transparent; }
.colors { margin: 3px 0 0 11px; }
.toolgrid.modes { margin-top: 2px; }

/* Documents */
.docs { display: flex; flex-direction: column; min-width: 0; padding-left: 1px; }
.tabs { display: flex; height: 29px; background: #424242; border-bottom: 1px solid #383838; }
.tab { display: flex; align-items: center; padding: 0 8px 2px 10px; gap: 6px; color: #a0a0a0; border-right: 1px solid #383838; }
.tab.active { background: #535353; color: #f0f0f0; }
.tab button { width: 7px; height: 16px; padding-top: 2px; }
.cloud { margin-right: -2px; }
.view { flex: 1; display: grid; grid-template-columns: 17px minmax(0, 1fr) 16px; grid-template-rows: 17px minmax(0, 1fr); background: #4a4a4a; min-height: 0; }
.gutter { grid-row: 1 / 3; grid-column: 3; background: #4a4a4a; }
.corner { border: dotted #5c5c5c; border-width: 0 1px 1px 0; }
.ruler { width: 100%; height: 100%; background: #4a4a4a; }
.ruler text { font: 10px "Noto Sans", sans-serif; fill: #999; }
.canvas { width: 100%; height: 100%; background: #282828; }
.status { display: flex; height: 17px; padding-bottom: 1px; background: #4a4a4a; font-family: "Noto Sans", sans-serif; font-size: 11px; }
.status input { width: 48px; padding-left: 4px; background: #434343; color: #eee; }
.status button { width: 184px; gap: 22px; background: #515151; color: #ddd; }
.timeline { display: flex; align-items: center; justify-content: space-between; height: 32px; border: solid #383838; border-width: 3px 0 2px; background: #424242; padding-right: 5px; }
.timeline button { height: 100%; width: 61px; background: #535353; padding-bottom: 3px; }

/* Icon strip */
.strip { display: flex; flex-direction: column; padding: 0 3px 0 2px; border-left: 1px solid #4c4c4c; }
.stripbody { flex: 1; background: #535353; }
.strip .dockhead { padding-left: 24px; }
.sgroup { border-bottom: 1px solid #383838; padding: 1px 0 4px; }
.sgroup button { width: 100%; height: 28px; }

/* Panels */
.panels { display: flex; flex-direction: column; padding-right: 2px; min-height: 0; }
.panel { background: #535353; margin-bottom: 2px; }
.ptabs { display: flex; align-items: center; height: 28px; background: #424242; border-bottom: 1px solid #383838; }
.ptabs button { height: 28px; padding: 0 9px 2px; color: #a4a4a4; border-right: 1px solid #383838; }
.ptabs .active { background: #535353; color: #f2f2f2; font-weight: bold; padding: 0 8px 2px; }
.ptabs svg { margin: 0 4px 0 auto; }
.scroller { display: grid; grid-template-columns: 1fr 15px; height: 318px; overflow: hidden; border-bottom: 1px solid #383838; }
.hlist { overflow: hidden; font-size: 13px; }
.snap { display: flex; align-items: center; height: 30px; border-bottom: 1px solid #707070; padding: 1px 0 0 5px; gap: 5px; font-size: 12px; }
.thumb { width: 31px; height: 18px; background: #fff; border: 1px solid #222; margin-right: 2px; }
.hrow { display: flex; align-items: center; height: 23px; padding-left: 6px; border-bottom: 1px solid #424242; }
.hrow input { appearance: none; width: 12px; height: 12px; border: 1px solid #6a6a6a; border-width: 0 1px 1px 0; margin-top: 2px; }
.hrow svg { margin: 3px 0 0 13px; width: 16px; }
.hrow span { margin-left: 12px; padding-bottom: 1px; }
.on.hrow { background: #6a6a6a; color: #fff; border-color: #6a6a6a; }
.on.hrow input { border-color: #444; border-width: 1px 0 0 1px; }
.off.hrow span { font-style: italic; color: #858585; }
.off.hrow svg { opacity: .6; }
.sbar { display: flex; flex-direction: column; align-items: center; background: #4a4a4a; padding: 11px 0 6px; }
.sbar i { flex: none; width: 12px; height: 187px; background: #666; margin: 3px 0 auto; }
.up { transform: rotate(180deg); }
.pfoot { display: flex; align-items: center; justify-content: flex-end; height: 25px; padding-right: 27px; gap: 18px; }

.cbody { padding: 14px 0 0 4px; height: 233px; }
.crow { display: flex; align-items: center; height: 18px; margin-bottom: 4px; font-family: "Noto Sans", "Noto Sans CJK KR", sans-serif; font-size: 11px; }
.crow .combo { height: 19px; }
.crow:first-child { margin-bottom: 7px; }
.font { width: 120px; margin-right: 17px; }
.style { width: 75px; }
.style input { padding-left: 7px; }
.pair { display: grid; grid-template-columns: 20px 85px 7px 21px 79px; align-items: center; }
.pair svg:nth-of-type(2) { grid-column: 4; }
.box { display: grid; grid-template-columns: 20px 55px 1fr 20px 56px 44px; height: 21px; margin-bottom: 3px; }
.box input, .cswatch { height: 21px; background: #464646; border: 1px solid #666; padding-left: 3px; width: 100%; }
.clabel { grid-column: 3 / 5; justify-self: end; font-size: 12px; padding-right: 6px; }
.cswatch { background: #000; }
.glyphs { display: grid; grid-template-columns: repeat(8, 24px); margin: 0 0 4px 10px; height: 23px; font-size: 15px; }
.glyphs button { border-radius: 3px; font-weight: bold; color: #ddd; }
.glyphs .on { background: #383838; border: 1px solid #333; color: #fff; }
.it { font-style: italic; }
.un { text-decoration: underline; } .st { text-decoration: line-through; } .ov { text-decoration: overline; }
.glyphs small, .glyphs sup, .glyphs sub { font-size: 10px; }
.glyphs sup { margin-bottom: 8px; } .glyphs small { margin-top: 4px; } .glyphs sub { margin-top: 6px; }
.lig { font-size: 17px; height: 24px; }
.lig button { font-weight: normal; color: #959595; }
.lang { height: 23px; font-size: 12px; gap: 6px; }
.lang .sel { width: 120px; height: 23px; }
.lang .aa { width: 67px; }
.lang select { padding-left: 9px; }

.layers { flex: 1; display: flex; flex-direction: column; min-height: 0; }
.layers .ptabs button { padding: 0 8px 2px; }
.lrow { display: flex; align-items: center; height: 29px; border-bottom: 1px solid #424242; padding: 0 21px 0 4px; }
.lrow.filter { height: 33px; padding-top: 8px; }
.lrow .combo { height: 19px; }
.lrow .pct { width: 55px; margin-left: 5px; }
.lrow .sel { height: 23px; width: 118px; }
.lrow .sel select { padding-left: 9px; }
.lrow label { margin-left: auto; font-size: 12px; }
.lrow .kind { width: 85px; grid-template-columns: 16px 1fr; }
.kind svg.kmag { grid-area: 1/1; justify-self: start; margin: 0 0 0 7px; }
.kind select { grid-area: 1/2; }
.kind select + svg { grid-area: 1/2; }
.ficons { display: flex; margin-left: auto; height: 20px; }
.ficons button { width: 24px; }
.ficons button:last-child { margin-right: -9px; width: 27px; }
.locks { height: 31px; border: 0; padding-bottom: 3px; padding-left: 8px; }
.locks > span:first-child { width: 42px; }
.locks button { width: 22px; }
.locks .combo button { width: 15px; }
.dim svg { color: #8c8c8c; }
.llist { flex: 1; display: grid; grid-template-columns: 1fr 15px; background: #4d4d4d; border-bottom: 1px solid #383838; }
.lbar { background: #484848; }
.llist ul { list-style: none; margin: 0; padding: 0; }
.llist li { display: flex; height: 28px; background: #535353; border-bottom: 1px solid #424242; }
.eyeb { width: 30px; border-right: 1px solid #424242; }
.lname { flex: 1; display: flex; align-items: center; gap: 7px; padding: 0 15px 0 2px; font-size: 13px; }
.on .lname { background: #6a6a6a; color: #fff; }
.lk { margin-left: auto; }
.lfoot { padding-right: 27px; gap: 14px; }
.layers .pfoot button { min-width: 12px; }
```
FILE: script.js
```js
// Draws the millimetre rulers along the top and left edges of the canvas.
const NS = "http://www.w3.org/2000/svg";
const STEP = 55.8; // pixels per 5 mm

function add(svg, name, attrs, text) {
  const el = document.createElementNS(NS, name);
  for (const k in attrs) el.setAttribute(k, attrs[k]);
  if (text !== undefined) el.textContent = text;
  svg.appendChild(el);
}

function drawRuler(svg, origin, length, vertical) {
  const first = Math.ceil(-origin / (STEP / 10));
  const last = Math.floor((length - origin) / (STEP / 10));
  for (let i = first; i <= last; i++) {
    const pos = Math.round(origin + (i * STEP) / 10) + 0.5;
    const major = i % 10 === 0;
    const size = major ? 17 : i % 2 ? 2 : 4;
    const color = major ? "#6c6c6c" : "#707070";
    add(svg, "path", { d: vertical ? `M${17 - size} ${pos}H17` : `M${pos} ${17 - size}V17`, stroke: color });
    if (!major) continue;
    const label = String(Math.abs(i / 2));
    if (!vertical) {
      add(svg, "text", { x: pos + 2, y: 13 }, label);
    } else {
      [...label].forEach((c, n) => add(svg, "text", { x: 5, y: pos + 9 + n * 9 }, c));
    }
  }
}

const rx = document.getElementById("rulerX");
const ry = document.getElementById("rulerY");
drawRuler(rx, 252, rx.clientWidth, false);
drawRuler(ry, 183, ry.clientHeight, true);
```
